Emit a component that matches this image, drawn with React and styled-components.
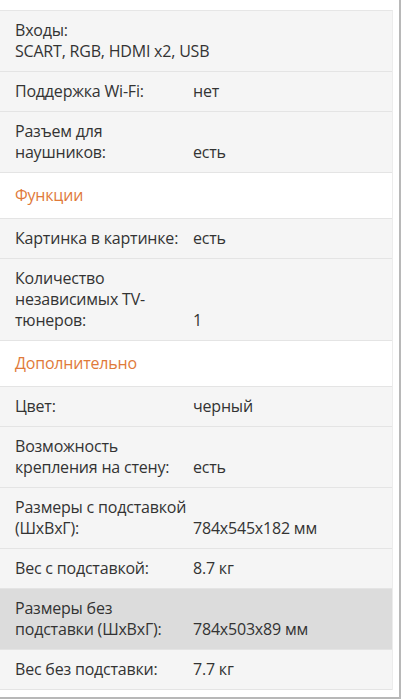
import styled, { createGlobalStyle } from 'styled-components'

const GlobalStyle = createGlobalStyle`
  html, body {
    margin: 0;
    padding: 0;
    background: #fff;
  }
  body {
    font-family: 'Open Sans', 'Noto Sans', sans-serif;
    color: #333;
    -webkit-font-smoothing: antialiased;
  }
`

const Frame = styled.div`
  width: 399px;
  height: 697px;
  border-right: 2px solid #b8b8b8;
  border-bottom: 2px solid #b8b8b8;
  overflow: hidden;
  background: #fff;
`

const Table = styled.div`
  margin-top: 10px;
  width: 392px;
  border-right: 1px solid #ececec;
  border-top: 1px solid #e6e6e6;
`

const Row = styled.div`
  display: grid;
  grid-template-columns: ${(p) => (p.$stack ? '1fr' : '178px 1fr')};
  align-items: end;
  padding: 9px 15px 9px 15px;
  background: ${(p) => (p.$active ? '#dcdcdc' : '#f5f5f5')};
  border-bottom: 1px solid #e4e4e4;
  font-size: 16px;
  line-height: 21px;
  letter-spacing: -0.2px;
`

const Label = styled.div``

const Value = styled.div``

const Section = styled.div`
  padding: 12px 15px 12px 15px;
  background: #fff;
  color: #e07a3a;
  font-size: 16px;
  line-height: 21px;
  letter-spacing: -0.2px;
  border-bottom: 1px solid #e4e4e4;
`

const rows = [
  { stack: true, label: 'Входы:', value: 'SCART, RGB, HDMI x2, USB' },
  { label: 'Поддержка Wi-Fi:', value: 'нет' },
  { label: 'Разъем для наушников:', value: 'есть' },
  { section: 'Функции' },
  { label: 'Картинка в картинке:', value: 'есть' },
  { label: 'Количество независимых TV-тюнеров:', value: '1' },
  { section: 'Дополнительно' },
  { label: 'Цвет:', value: 'черный' },
  { label: 'Возможность крепления на стену:', value: 'есть' },
  { label: 'Размеры с подставкой (ШхВхГ):', value: '784x545x182 мм' },
  { label: 'Вес с подставкой:', value: '8.7 кг' },
  { label: 'Размеры без подставки (ШхВхГ):', value: '784x503x89 мм', active: true },
  { label: 'Вес без подставки:', value: '7.7 кг' },
]

export default function App() {
  return (
    <>
      <GlobalStyle />
      <Frame>
        <Table>
          {rows.map((r, i) =>
            r.section ? (
              <Section key={i}>{r.section}</Section>
            ) : (
              <Row key={i} $stack={r.stack} $active={r.active}>
                <Label>{r.label}</Label>
                <Value>{r.value}</Value>
              </Row>
            )
          )}
        </Table>
      </Frame>
    </>
  )
}
